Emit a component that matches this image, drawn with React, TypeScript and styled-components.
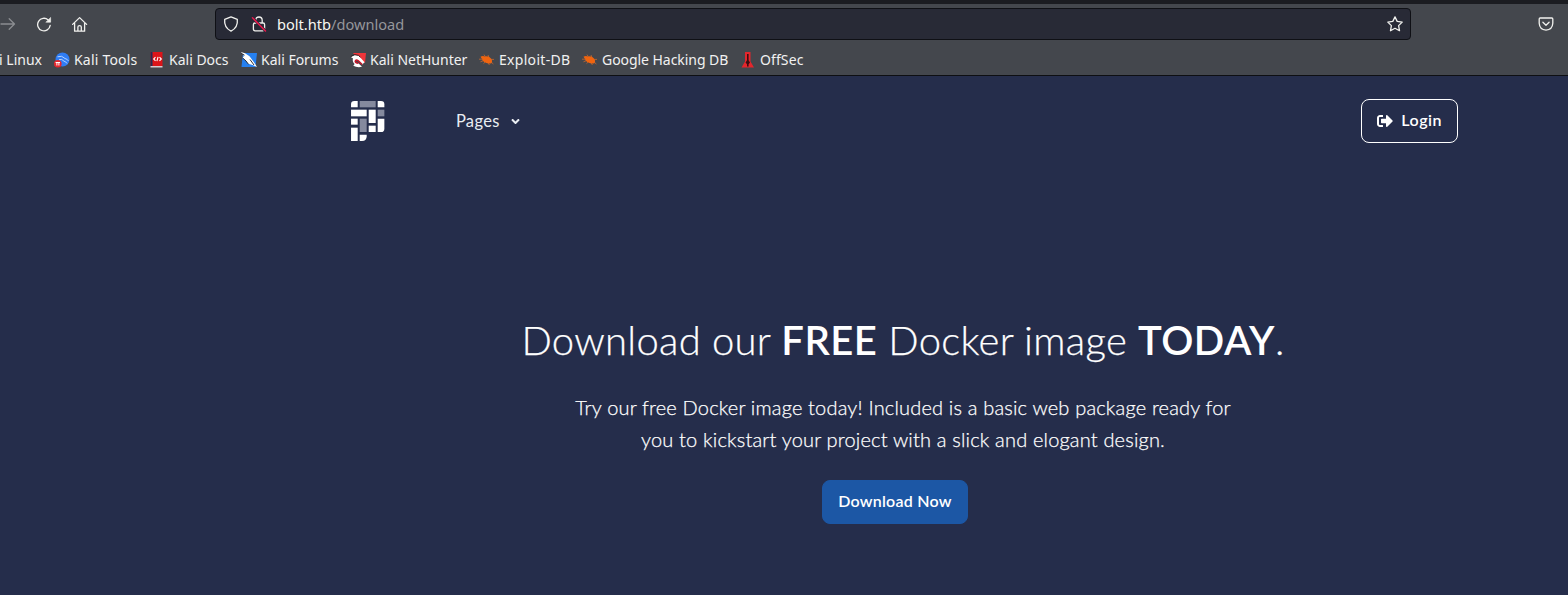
import React from 'react';
import styled, { createGlobalStyle } from 'styled-components';
import { FaSignOutAlt, FaAngleDown } from 'react-icons/fa';

const Global = createGlobalStyle`
  * { box-sizing: border-box; }
  body { margin: 0; background: #252d4b; }
`;

const Shell = styled.div`
  display: flex;
  flex-direction: column;
  height: 595px;
  overflow: hidden;
  background: #252d4b;
  color: #fff;
`;

const Chrome = styled.header`
  height: 76px;
  flex: none;
  background: #44474d;
  border-top: 4px solid #1b1c21;
  border-bottom: 1px solid #0e0f13;
  font-family: "Noto Sans", sans-serif;
  color: #f1f1f1;
`;

const Toolbar = styled.div`
  display: flex;
  align-items: center;
  height: 40px;
`;

const ToolIcon = styled.span<{ $left: number; $dim?: boolean }>`
  display: flex;
  width: 16px;
  height: 16px;
  flex: none;
  margin-left: ${p => p.$left}px;
  color: ${p => (p.$dim ? '#8b8d91' : '#f1f1ee')};
`;

const AddressBar = styled.div`
  display: flex;
  align-items: center;
  width: 1196px;
  height: 32px;
  margin-left: 127.5px;
  padding: 0 7px;
  border: 1px solid #0f1015;
  border-radius: 4px;
  background: #282a36;
`;

const Url = styled.span`
  flex: 1;
  margin-left: 10px;
  font-size: 14.6px;
  line-height: 20px;
  color: #f8f8f2;
`;

const Path = styled.span`
  color: #95969b;
`;

const Bookmarks = styled.nav`
  display: flex;
  align-items: center;
  height: 31px;
  font-size: 14px;
  white-space: nowrap;
`;

const Bookmark = styled.span<{ $width: number; $clipped?: boolean; $spacing?: number }>`
  display: flex;
  align-items: center;
  justify-content: ${p => (p.$clipped ? 'flex-end' : 'flex-start')};
  gap: 4.5px;
  width: ${p => p.$width}px;
  flex: none;
  letter-spacing: ${p => p.$spacing ?? 0}px;
  svg { flex: none; }
`;

const Page = styled.main`
  flex: 1;
  font-family: Lato, sans-serif;
`;

const NavBar = styled.nav`
  display: flex;
  align-items: center;
  width: 1106.8px;
  height: 44px;
  margin: 23px 0 0 351.2px;
`;

const NavLink = styled.a`
  display: flex;
  align-items: center;
  gap: 9.5px;
  flex: 1;
  margin-left: 71.3px;
  font-size: 16.5px;
  line-height: 24px;
  letter-spacing: 0.35px;
  color: #eaedf2;
`;

const Button = styled.button<{ $primary?: boolean }>`
  display: flex;
  align-items: center;
  gap: 8px;
  height: 44px;
  padding: 0 15px;
  border: 1px solid ${p => (p.$primary ? '#1c57a5' : '#fff')};
  border-radius: 8px;
  background: ${p => (p.$primary ? '#1c57a5' : 'transparent')};
  color: #fff;
  font-family: inherit;
  font-size: 16px;
  font-weight: 600;
  letter-spacing: ${p => (p.$primary ? 0.26 : 0.5)}px;
  white-space: nowrap;
  svg { margin-bottom: 1px; }
`;

const ButtonLabel = styled.span`
  padding-bottom: 3px;
`;

const Hero = styled.section`
  display: flex;
  flex-direction: column;
  align-items: center;
  width: 1106px;
  margin: 173px 0 0 350px;
`;

const Title = styled.h1`
  margin: 0;
  font-size: 40px;
  line-height: 48px;
  font-weight: 300;
  letter-spacing: 0.3px;
  word-spacing: -0.3px;
  white-space: nowrap;
  -webkit-text-stroke: 0.25px #fff;
  b { font-weight: 600; letter-spacing: 0.5px; -webkit-text-stroke: 0; }
`;

const Lead = styled.p`
  margin: 27px 0 25px;
  font-size: 20px;
  line-height: 32px;
  font-weight: 300;
  letter-spacing: 0.18px;
  text-align: center;
  white-space: nowrap;
  -webkit-text-stroke: 0.25px #fff;
`;

const Actions = styled.div`
  display: flex;
  margin-right: 16px;
`;

const Stroke = ({ children }: { children: React.ReactNode }) => (
  <svg width="16" height="16" viewBox="0 0 16 16" fill="none" stroke="currentColor" strokeWidth="1.3" strokeLinecap="round" strokeLinejoin="round">
    {children}
  </svg>
);

const Logo = () => (
  <svg width="33.4" height="40" viewBox="34 33 100 120" fill="#fff">
    <path d="M34 52V43Q34 33 44 33H54V52Z" />
    <path d="M60 33H108V52H60Z" fill="#858a9e" />
    <path d="M114 33H124Q134 33 134 43V52H114Z" />
    <path d="M34 59H81V79H34Z" />
    <path d="M87 59H108V99H87Z" />
    <path d="M114 59H134V79H114Z" fill="#858a9e" />
    <path d="M34 86H54V104H34Z" />
    <path d="M60 86H81V126H60Z" fill="#858a9e" />
    <path d="M87 107H108V126H87Z" />
    <path d="M114 86H134V116Q134 126 124 126H114Z" />
    <path d="M34 113H54V153H34Z" />
    <path d="M60 134H81V139Q81 153 67 153H60Z" />
  </svg>
);

const ToolsIcon = () => (
  <svg width="16" height="16" viewBox="0 0 16 16">
    <circle cx="8.5" cy="7.5" r="7" fill="#2f7df5" />
    <path d="M3.5 4.8Q8 3 11 6.5Q13.5 7 14.5 9M5 7.6Q8 6.5 10 9.2Q12 9.5 13 11.5" fill="none" stroke="#c3daff" strokeWidth="0.9" />
    <circle cx="3.8" cy="11.8" r="3.8" fill="#e8262c" />
    <path d="M1.6 10.5H6M2.9 10.5V13.5M4.9 10.5V13.5" stroke="#fff" strokeWidth="1" />
  </svg>
);

const DocsIcon = () => (
  <svg width="16" height="16" viewBox="0 0 16 16">
    <path d="M1.5 0H13.5V14H1.5Z" fill="#dc1419" />
    <path d="M1.5 0H3.5V14H1.5Z" fill="#272a52" />
    <path d="M1.5 14H13.5V15.5H1.5Z" fill="#d9c9cf" />
    <path d="M6.5 5.2L4.7 7L6.5 8.8M10.5 5.2L12.3 7L10.5 8.8M9.1 4.8L7.9 9.2" fill="none" stroke="#fff" strokeWidth="1.1" />
  </svg>
);

const ForumsIcon = () => (
  <svg width="16" height="16" viewBox="0 0 16 16">
    <path d="M2 1H16L14.5 15H0.5Z" fill="#2680ef" />
    <path d="M0 0L4 1.2L8.5 4.2L13.5 11L16 15L11.5 13L7 11.8L5 8.8L1.5 5.8L3 4Z" fill="#fff" />
    <path d="M0.5 1.5L3.5 3.2M9 7.5L13 13M1.5 5.8L5 9L7.5 12.3" fill="none" stroke="#1a1c24" strokeWidth="0.9" />
  </svg>
);

const HunterIcon = () => (
  <svg width="16" height="16" viewBox="0 0 16 16">
    <path d="M3 1H16L15 11L11 8L6 5Z" fill="#f0353a" />
    <path d="M0.8 5Q4.5 1.8 8.5 3.6L14.6 10.2L12.2 12.5L8.4 8.8Q5.6 7.4 5 9.4Q5.4 11.2 8.4 11.2L12 14.8Q7 15.8 3.3 13.8L4.6 12Q2 9.5 3 6.6Z" fill="#fff" />
    <path d="M0.8 4.6Q4.5 1.4 8.5 3.4L10.4 5.2" fill="none" stroke="#1c1216" strokeWidth="0.9" />
    <path d="M12.2 12.5L8.4 8.8Q6 7.2 5.2 9.2Q5.4 11.2 8.4 11.2" fill="none" stroke="#c8172a" strokeWidth="1.5" />
  </svg>
);

const BugIcon = () => (
  <svg width="16" height="16" viewBox="0 0 16 16">
    <path d="M1.5 4.8Q3.5 3.2 6 4.4Q9.5 3.4 12 6.4Q14 9 12.4 11.2Q8 12 5.2 10Q3.4 9 3 7Z" fill="#f0640f" />
    <path d="M0 7.2H4M5 2.6L6.5 5M9 3L9.8 5.3M12 7.4L15 7.4M12 10L14.4 12M9 11L10.5 13M6 10.2L4.5 11.6M4 8.8L1.5 9.8" stroke="#c9682d" strokeWidth="0.8" />
  </svg>
);

const OffSecIcon = () => (
  <svg width="16" height="16" viewBox="0 0 16 16">
    <path d="M5 0H10.5V9.5L14 15.5H1.5L5 9.5Z" fill="#e4262c" />
    <path d="M7 2H8.6V8.2L10 10.5L8.6 12.3V14.5H7V12.3L5.6 10.5L7 8.2Z" fill="#3b0d12" />
  </svg>
);

const bookmarks = [
  { label: 'Kali Tools', width: 95, spacing: 0.2, icon: <ToolsIcon /> },
  { label: 'Kali Docs', width: 92, icon: <DocsIcon /> },
  { label: 'Kali Forums', width: 109, icon: <ForumsIcon /> },
  { label: 'Kali NetHunter', width: 129, icon: <HunterIcon /> },
  { label: 'Exploit-DB', width: 103, spacing: 0.3, icon: <BugIcon /> },
  { label: 'Google Hacking DB', width: 158, spacing: -0.05, icon: <BugIcon /> },
  { label: 'OffSec', width: 70, spacing: 0.1, icon: <OffSecIcon /> },
];

export default function App() {
  return (
    <Shell>
      <Global />
      <Chrome>
        <Toolbar>
          <ToolIcon $left={0} $dim>
            <Stroke><path d="M1 8H14.5M9.2 2.8L14.5 8L9.2 13.2" /></Stroke>
          </ToolIcon>
          <ToolIcon $left={20}>
            <Stroke>
              <path d="M14.2 9.4A6.3 6.3 0 1 1 12.2 3.9" />
              <path d="M14.6 1.8V6.2H10.2Z" fill="currentColor" strokeWidth="0.6" />
            </Stroke>
          </ToolIcon>
          <ToolIcon $left={19.5}>
            <Stroke>
              <path d="M0.6 8.4L7.6 1.6L14.6 8.4M2.6 7.2V15.2H12.6V7.2M5.9 14.9V10.9Q5.9 9.6 7.6 9.6Q9.3 9.6 9.3 10.9V14.9" />
            </Stroke>
          </ToolIcon>
          <AddressBar>
            <ToolIcon $left={0}>
              <Stroke><path d="M8 0.9L14.3 3.4Q15.2 11.5 8 15.2Q0.8 11.5 1.7 3.4Z" /></Stroke>
            </ToolIcon>
            <ToolIcon $left={12}>
              <Stroke>
                <path d="M4.8 7V4.2Q4.8 1 8 1Q11.2 1 11.2 4.2V7M4 7H12Q13.6 7 13.6 8.6V13Q13.6 14.8 12 14.8H4Q2.4 14.8 2.4 13V8.6Q2.4 7 4 7Z" />
                <path d="M1.5 1.8L14.5 15" stroke="#282a36" strokeWidth="2.8" />
                <path d="M1.5 1.8L14.5 15" stroke="#e8184c" strokeWidth="1.5" />
              </Stroke>
            </ToolIcon>
            <Url>bolt.htb<Path>/download</Path></Url>
            <ToolIcon $left={0}>
              <Stroke><path d="M8 0.9L10.2 5.4L15.2 6.1L11.6 9.6L12.5 14.7L8 12.3L3.5 14.7L4.4 9.6L0.8 6.1L5.8 5.4Z" /></Stroke>
            </ToolIcon>
          </AddressBar>
          <ToolIcon $left={127}>
            <Stroke>
              <path d="M2.2 2H13.8Q14.8 2 14.8 3V7.3Q14.4 13.8 8 14.1Q1.6 13.8 1.2 7.3V3Q1.2 2 2.2 2Z" />
              <path d="M4.9 6.3L8 9.3L11.1 6.3" />
            </Stroke>
          </ToolIcon>
        </Toolbar>
        <Bookmarks>
          <Bookmark $width={42} $clipped>i Linux</Bookmark>
          <Bookmark $width={11.5} />
          {bookmarks.map(b => (
            <Bookmark key={b.label} $width={b.width} $spacing={b.spacing}>{b.icon}{b.label}</Bookmark>
          ))}
        </Bookmarks>
      </Chrome>
      <Page>
        <NavBar>
          <Logo />
          <NavLink>Pages <FaAngleDown size={13} /></NavLink>
          <Button><FaSignOutAlt size={16} /><ButtonLabel>Login</ButtonLabel></Button>
        </NavBar>
        <Hero>
          <Title>Download our <b>FREE</b> Docker image <b>TODAY</b>.</Title>
          <Lead>
            Try our free Docker image today! Included is a basic web package ready for
            <br />
            you to kickstart your project with a slick and elogant design.
          </Lead>
          <Actions><Button $primary><ButtonLabel>Download Now</ButtonLabel></Button></Actions>
        </Hero>
      </Page>
    </Shell>
  );
}
